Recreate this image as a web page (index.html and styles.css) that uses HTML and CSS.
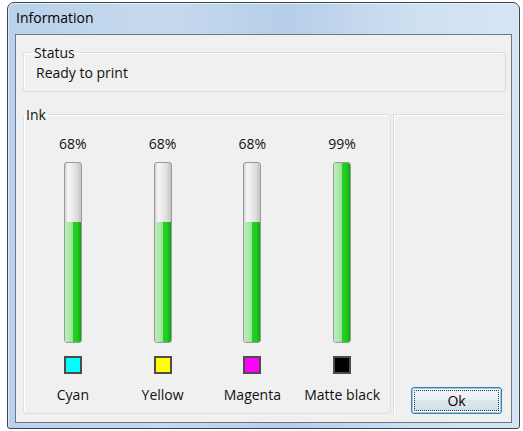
FILE: index.html
```html
<!DOCTYPE html>
<html>
<head>
<meta charset="utf-8">
<title>Information</title>
<link rel="stylesheet" href="styles.css">
</head>
<body>
<div class="window">
  <div class="titlebar">Information</div>
  <div class="client">
    <fieldset class="group status">
      <legend>Status</legend>
      <div class="status-text">Ready to print</div>
    </fieldset>
    <div class="lower">
      <fieldset class="group ink">
        <legend>Ink</legend>
        <div class="inks">
          <div class="ink-col">
            <div class="pct">68%</div>
            <div class="bar"><div class="fill" style="height:67%"></div></div>
            <div class="swatch cyan"></div>
            <div class="name">Cyan</div>
          </div>
          <div class="ink-col">
            <div class="pct">68%</div>
            <div class="bar"><div class="fill" style="height:67%"></div></div>
            <div class="swatch yellow"></div>
            <div class="name">Yellow</div>
          </div>
          <div class="ink-col">
            <div class="pct">68%</div>
            <div class="bar"><div class="fill" style="height:67%"></div></div>
            <div class="swatch magenta"></div>
            <div class="name">Magenta</div>
          </div>
          <div class="ink-col">
            <div class="pct">99%</div>
            <div class="bar"><div class="fill" style="height:100%"></div></div>
            <div class="swatch black"></div>
            <div class="name">Matte black</div>
          </div>
        </div>
      </fieldset>
      <div class="side">
        <button class="ok">Ok</button>
      </div>
    </div>
  </div>
</div>
</body>
</html>
```

FILE: styles.css
```css
html, body {
  margin: 0;
  padding: 0;
  background: #ffffff;
}
body {
  font-family: "Open Sans", "Noto Sans", sans-serif;
  font-size: 14px;
  line-height: 19px;
  color: #111;
  width: 523px;
  height: 431px;
  overflow: hidden;
}
.window {
  margin: 2px 3px 0 7px;
  height: 427px;
  box-sizing: border-box;
  border: 1px solid #3d4650;
  border-radius: 7px 7px 3px 3px;
  background: linear-gradient(to right, #b9d1ea 0%, #c6daee 30%, #b6cee8 55%, #cfe0f2 80%, #d6e5f4 100%);
  padding: 0 7px 5px 7px;
  display: flex;
  flex-direction: column;
  box-shadow: inset 0 1px 0 #e6f0fa, inset 1px 0 0 #dbe8f5, inset -1px 0 0 #dbe8f5;
}
.titlebar {
  height: 31px;
  padding: 5px 0 0 1px;
  box-sizing: border-box;
  color: #000;
}
.client {
  flex: 1;
  background: #f0f0f0;
  border: 1px solid #6c7985;
  padding: 8px 5px 8px 7px;
  display: flex;
  flex-direction: column;
}
.group {
  margin: 0;
  border: 1px solid #d5dfe5;
  border-radius: 3px;
  box-shadow: inset 1px 1px 0 #ffffff;
  padding: 0 12px 10px 12px;
  min-width: 0;
}
.group legend {
  padding: 0 2px;
  margin-left: -4px;
  line-height: 19px;
}
.status {
  padding-bottom: 9px;
}
.status-text {
  padding-top: 1px;
}
.lower {
  display: flex;
  margin-top: 13px;
  flex: 1;
}
.ink {
  width: 368px;
  box-sizing: border-box;
  padding: 10px 3px 8px 4px;
}
.inks {
  display: grid;
  grid-template-columns: repeat(4, 1fr);
}
.ink-col {
  display: flex;
  flex-direction: column;
  align-items: center;
}
.pct {
  height: 19px;
}
.bar {
  margin-top: 9px;
  width: 18px;
  height: 181px;
  box-sizing: border-box;
  border: 1px solid #9a9a9a;
  border-radius: 3px 3px 3px 3px;
  background: linear-gradient(to right, #d0d0d0 0%, #f6f6f6 18%, #ebebeb 45%, #e0e0e0 70%, #c4c4c4 100%);
  display: flex;
  flex-direction: column;
  justify-content: flex-end;
  overflow: hidden;
}
.fill {
  background: linear-gradient(to right, #bdeebd 0%, #a8e9a8 30%, #94e294 48%, #27d027 52%, #1fcb1f 78%, #10a410 100%);
}
.swatch {
  margin-top: 13px;
  width: 18px;
  height: 18px;
  box-sizing: border-box;
  border: 2px solid #4c4c4c;
}
.cyan { background: #00ffff; }
.yellow { background: #ffff00; }
.magenta { background: #ff00ff; }
.black { background: #000000; }
.name {
  margin-top: 11px;
  height: 19px;
  white-space: nowrap;
}
.side {
  flex: 1;
  margin-top: 9px;
  margin-left: 2px;
  border-top: 1px solid #d5dfe5;
  border-left: 1px solid #d5dfe5;
  box-shadow: inset 1px 1px 0 #ffffff;
  display: flex;
  justify-content: flex-end;
  align-items: flex-end;
  padding-right: 4px;
}
.ok {
  width: 91px;
  height: 27px;
  box-sizing: border-box;
  font-family: inherit;
  font-size: 14px;
  color: #000;
  border: 1px solid #3c7fb1;
  border-radius: 3px;
  background: linear-gradient(to bottom, #f4f7fa 0%, #eaeff4 45%, #dde5ec 50%, #d3dde6 100%);
  box-shadow: inset 0 0 0 1px #8ed0ee, inset 0 0 0 2px #ffffff;
  outline: 1px dotted #333;
  outline-offset: -4px;
  padding: 0;
}
```
